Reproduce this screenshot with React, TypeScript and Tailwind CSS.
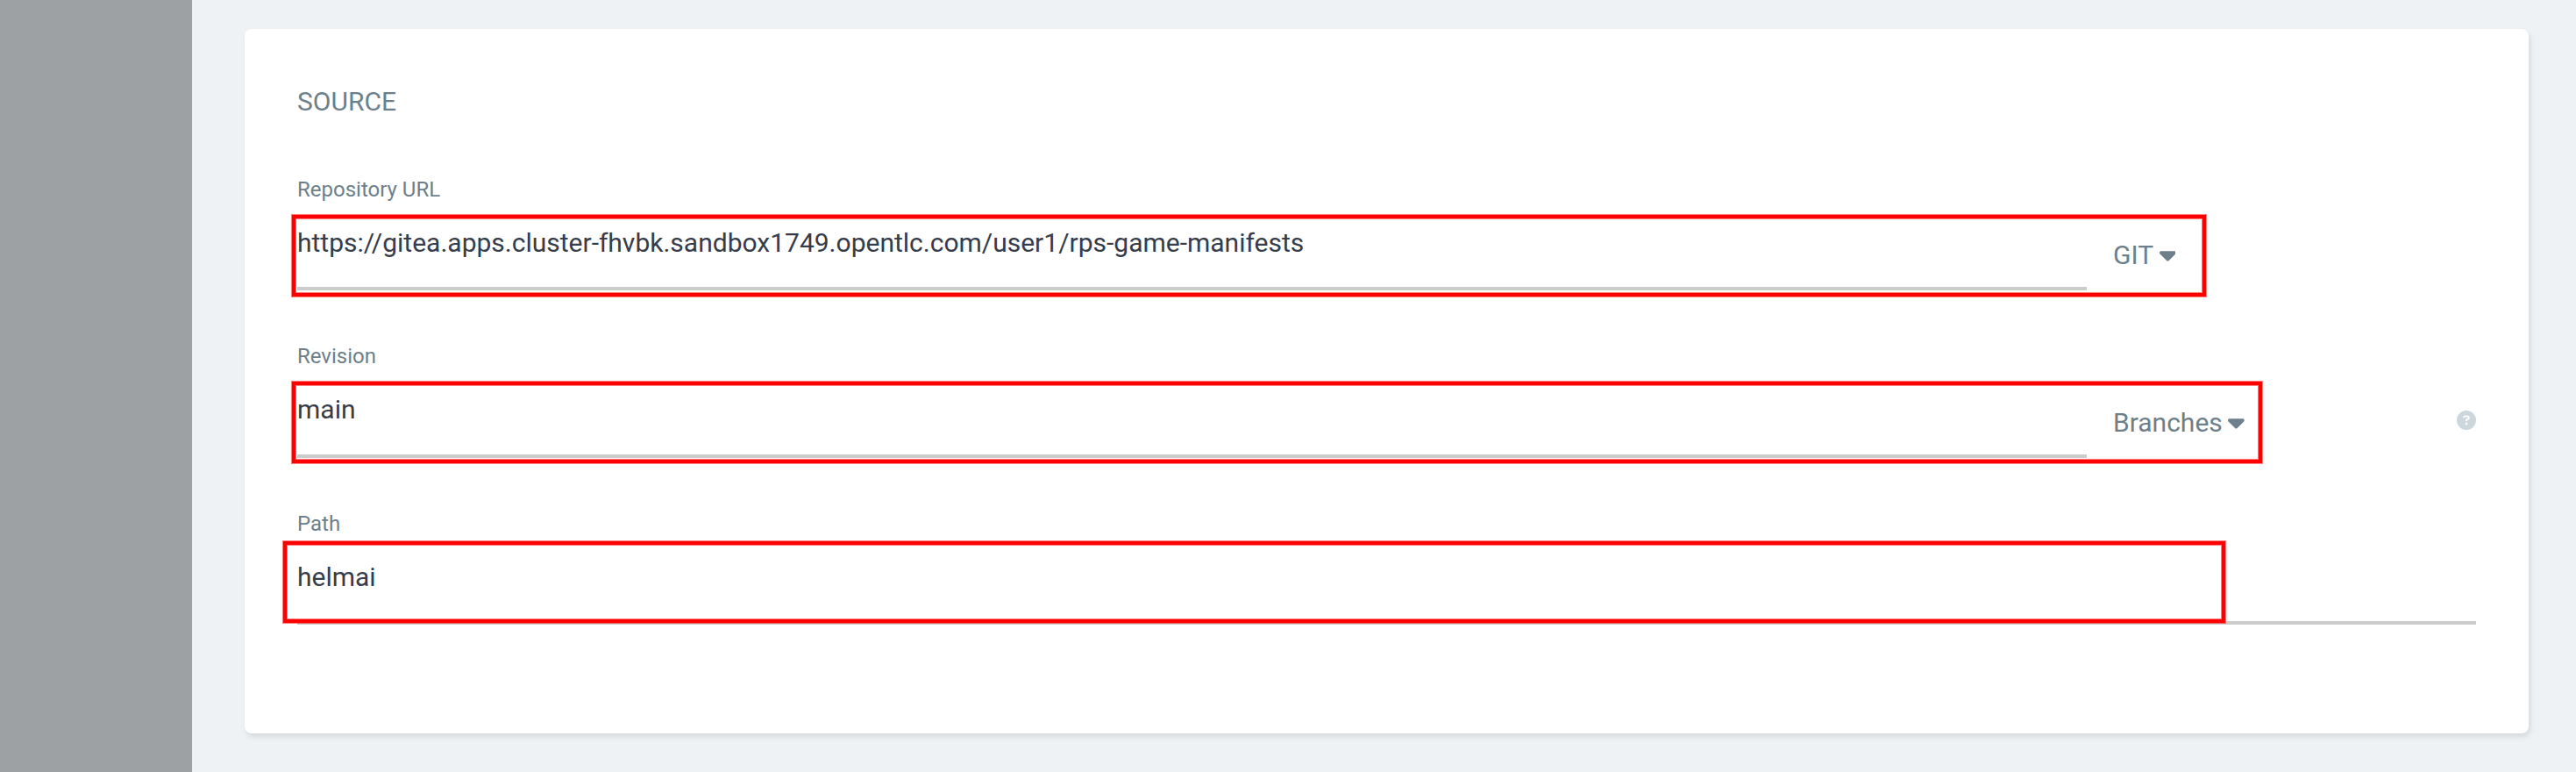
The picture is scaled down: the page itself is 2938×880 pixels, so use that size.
import { FaCaretDown, FaCircleQuestion } from "react-icons/fa6";
import type { ReactNode } from "react";

const highlight =
  "pointer-events-none absolute border-4 border-[#ff0000] ring-1 ring-[#ff0000]/50 inset-ring-1 inset-ring-[#ff0000]/50";

function Field({ label, value, narrow, children }: { label: string; value: string; narrow?: boolean; children?: ReactNode }) {
  return (
    <div className="flex h-[190.5px] flex-col">
      <div className="h-[49.2px] text-[24px] leading-[32px] text-[#6d7f8b]">{label}</div>
      <div className="flex h-[82px]">
        <div className={`h-full border-b-4 border-[#cccccc] pt-[9.8px] text-[30px] leading-[35px] text-[#363c4a] ${narrow ? "w-[2041px]" : "w-full"}`}>
          {value}
        </div>
        {children}
      </div>
    </div>
  );
}

function Picker({ label }: { label: string }) {
  return (
    <div className="ml-[30px] mt-[24px] flex h-[35px] items-center gap-[6.5px] text-[30px] leading-[35px] text-[#6d7f8b]">
      <span>{label}</span>
      <FaCaretDown className="mb-[1px] h-[30px] w-[18.75px]" />
    </div>
  );
}

export default function App() {
  return (
    <div className="relative flex h-[880px] w-[2938px] overflow-hidden bg-[#eef2f5] font-[Roboto,sans-serif]">
      <aside className="w-[219px] shrink-0 bg-[#9da1a3]" />
      <main className="pl-[60px] pt-[33px]">
        <section className="h-[803px] w-[2605px] rounded-[8px] bg-white px-[60px] pt-[62px] shadow-[2px_4px_6px_rgba(0,0,0,0.1)]">
          <h2 className="h-[104.9px] text-[30px] leading-[41px] text-[#6d7f8b]">SOURCE</h2>
          <Field label="Repository URL" value="https://gitea.apps.cluster-fhvbk.sandbox1749.opentlc.com/user1/rps-game-manifests" narrow>
            <Picker label="GIT" />
          </Field>
          <Field label="Revision" value="main" narrow>
            <Picker label="Branches" />
            <FaCircleQuestion className="ml-auto mt-[28.4px] size-[22px] text-[#ccd6dd]" />
          </Field>
          <Field label="Path" value="helmai" />
        </section>
      </main>
      <div className={`${highlight} left-[333px] top-[245px] h-[93px] w-[2183px]`} />
      <div className={`${highlight} left-[333px] top-[435px] h-[93px] w-[2247px]`} />
      <div className={`${highlight} left-[323px] top-[617px] h-[93px] w-[2215px]`} />
    </div>
  );
}
